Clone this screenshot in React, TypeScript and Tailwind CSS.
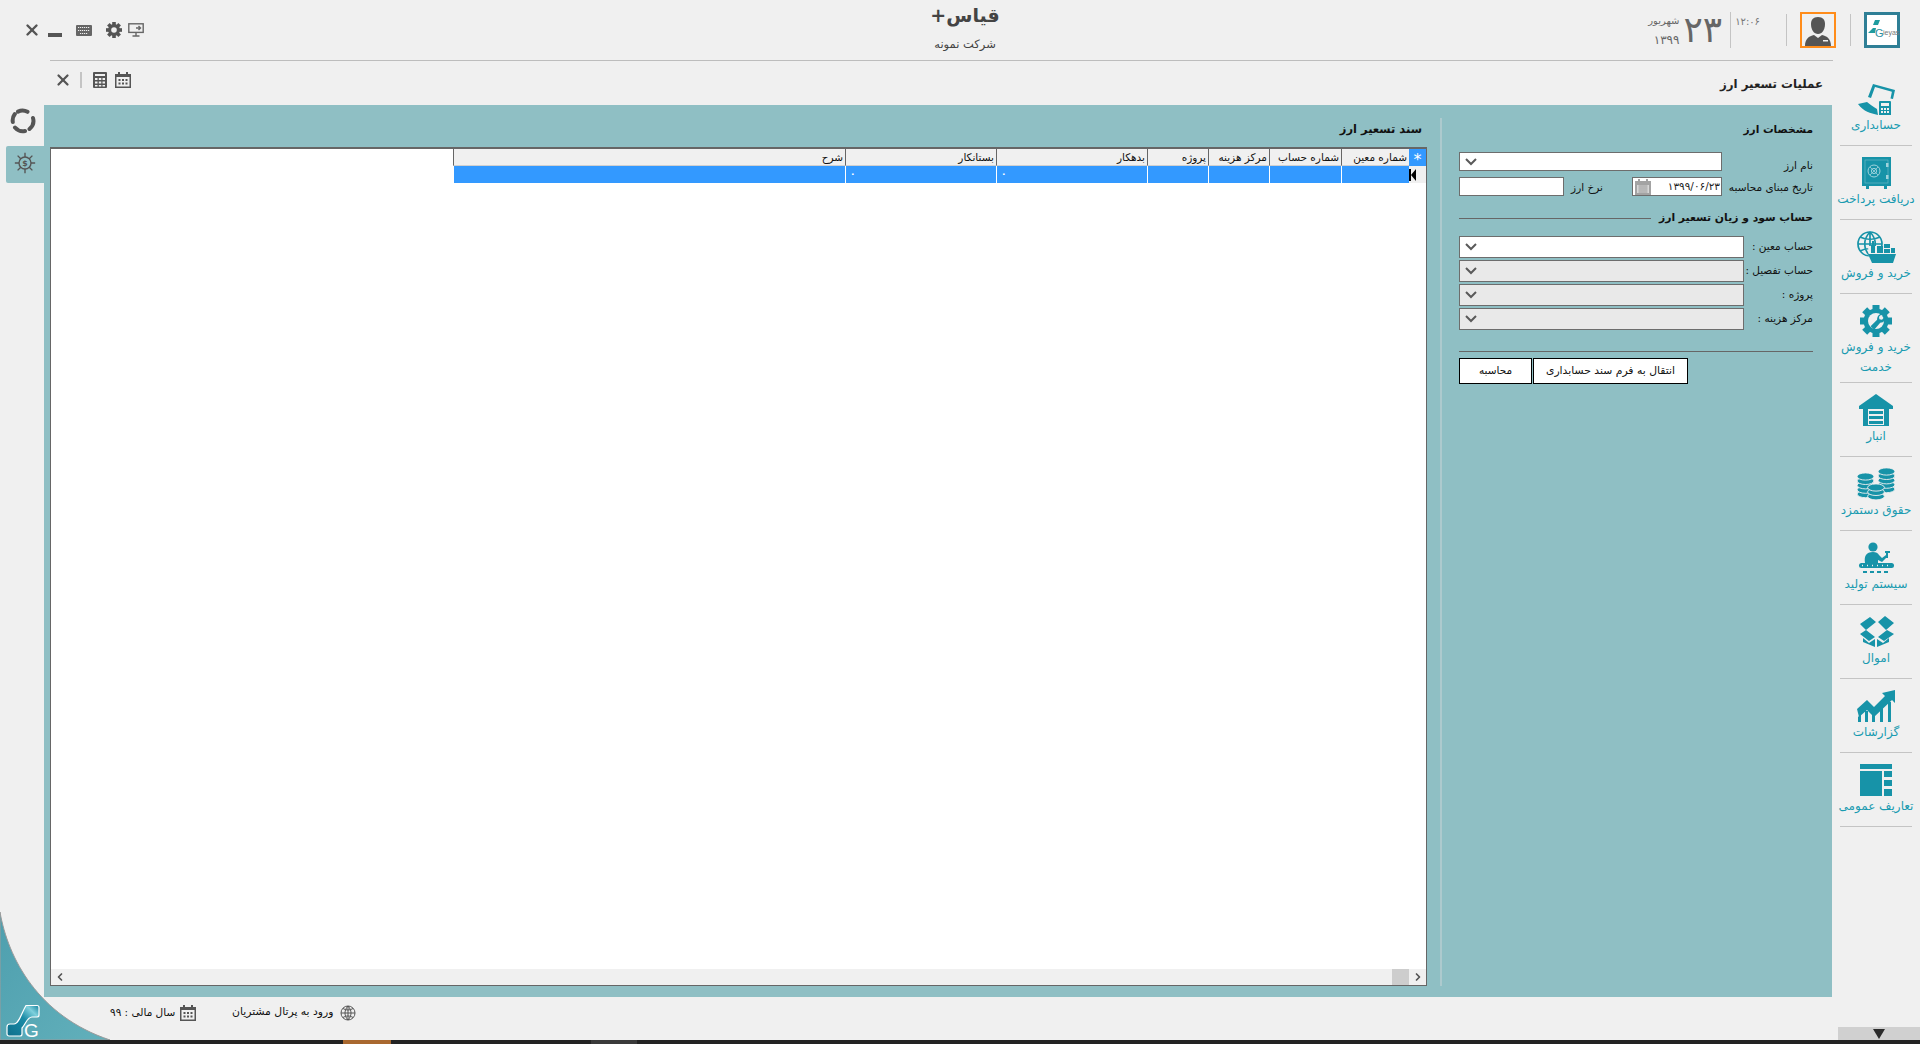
import type { ReactNode } from 'react';
import { ChevronLeft, ChevronRight, X } from 'lucide-react';

const TEAL = '#1793a8';

function SideItem({ icon, label, tall }: { icon: ReactNode; label: string[]; tall?: boolean }) {
  return (
    <div className={`flex flex-col items-center border-b border-[#c4c4c4] pt-[11px] ${tall ? 'h-[89px]' : 'h-[74px]'}`}>
      <svg viewBox="0 0 40 32" className="h-[32px] w-[40px] shrink-0" fill={TEAL}>
        {icon}
      </svg>
      {label.map((t) => (
        <div key={t} dir="rtl" className="h-[20px] whitespace-nowrap text-[12px] leading-[20px] text-[#1a9bb0]">
          {t}
        </div>
      ))}
    </div>
  );
}

function CoinStack({ cx, top, layers }: { cx: number; top: number; layers: number }) {
  const items = [];
  for (let i = layers - 1; i >= 0; i--) {
    items.push(
      <ellipse key={i} cx={cx} cy={top + 3.5 + i * 4.4} rx={8.4} ry={3.6} fill={TEAL} stroke="#f0f0f0" strokeWidth={0.9} />,
    );
  }
  return <g>{items}</g>;
}

function Combo({ disabled, className }: { disabled?: boolean; className: string }) {
  return (
    <div className={`flex items-center border border-[#6d6d6d] pl-[5px] ${disabled ? 'bg-[#e9e9e9]' : 'bg-white'} ${className}`}>
      <svg viewBox="0 0 12 8" className="h-[8px] w-[12px]" fill="none" stroke="#5a5a5a" strokeWidth="2">
        <path d="M1 1l5 5 5-5" />
      </svg>
    </div>
  );
}

function FormLabel({ children, className }: { children: ReactNode; className?: string }) {
  return (
    <span dir="rtl" className={`whitespace-nowrap text-[10.5px] text-[#111] ${className ?? ''}`}>
      {children}
    </span>
  );
}

const columns = [
  { title: 'شماره معین', w: 'w-[68px]' },
  { title: 'شماره حساب', w: 'w-[72px]' },
  { title: 'مرکز هزینه', w: 'w-[61px]' },
  { title: 'پروژه', w: 'w-[61px]' },
  { title: 'بدهکار', w: 'w-[151px]', zero: true },
  { title: 'بستانکار', w: 'w-[151px]', zero: true },
  { title: 'شرح', w: 'w-[392px]' },
];

export default function App() {
  return (
    <div className="relative flex h-[1044px] w-[1920px] flex-col overflow-hidden bg-[#f0f0f0] font-['DejaVu_Sans',sans-serif]">
      {/* corner curve behind the panels */}
      <svg viewBox="0 0 120 132" className="absolute bottom-[4px] left-0 h-[132px] w-[120px]">
        <defs>
          <linearGradient id="corner" x1="0" y1="0" x2="1" y2="1">
            <stop offset="0" stopColor="#4e9fae" />
            <stop offset="1" stopColor="#62b0bb" />
          </linearGradient>
        </defs>
        <path d="M0 4C8 50 38 108 110 132L0 132Z" fill="url(#corner)" stroke="#9b9b9b" strokeWidth={1} />
      </svg>

      {/* top header */}
      <header className="relative flex h-[60px] shrink-0 items-start">
        <div className="ml-[23px] mt-[21px] flex items-center text-[#555]">
          <X size={18} strokeWidth={3.2} />
          <div className="ml-[7px] mt-[10px] h-[4px] w-[14px] bg-[#555]" />
          <svg viewBox="0 0 16 11" className="ml-[14px] h-[11px] w-[16px]" fill="#666">
            <rect width="16" height="11" rx="1" />
            <path d="M2 2.5h12M2 5.5h12M4 8.5h8" stroke="#f0f0f0" strokeWidth="1" strokeDasharray="1.2 .8" />
          </svg>
          <svg viewBox="0 0 16 16" className="ml-[14px] h-[16px] w-[16px]" fill="#555">
            {[0, 45, 90, 135].map((a) => (
              <rect key={a} x="6.2" y="0" width="3.6" height="16" transform={`rotate(${a} 8 8)`} />
            ))}
            <circle cx="8" cy="8" r="6" />
            <circle cx="8" cy="8" r="2.8" fill="#f0f0f0" />
          </svg>
          <svg viewBox="0 0 16 14" className="ml-[6px] h-[14px] w-[16px]" fill="none" stroke="#666" strokeWidth="1.4">
            <rect x=".8" y=".8" width="14.4" height="8.6" />
            <path d="M8 10v2.5M4.5 13h7M8 5h4.5M10.5 3l2 2-2 2" />
          </svg>
        </div>
        <div className="absolute left-[885px] top-[2px] flex w-[160px] flex-col items-center text-[#444]">
          <div className="text-[19px] font-bold leading-[26px]" dir="rtl">قیاس+</div>
          <div className="mt-[9px] text-[11.5px] leading-[14px]" dir="rtl">شرکت نمونه</div>
        </div>
        <div className="ml-auto mr-[20px] mt-[12px] flex h-[36px] items-center">
          <div className="flex flex-col items-end pr-[4px] text-[#666]">
            <span className="text-[10px] leading-[14px]" dir="rtl">شهریور</span>
            <span className="mt-[5px] text-[12px] leading-[14px] tracking-[3px]">۱۳۹۹</span>
          </div>
          <span className="text-[36px] leading-[36px] text-[#666]">۲۳</span>
          <div className="ml-[8px] h-[36px] w-px bg-[#c4c4c4]" />
          <span className="ml-[4px] self-start pt-[3px] text-[10px] leading-[14px] text-[#777]">۱۲:۰۶</span>
          <div className="ml-[26px] h-[32px] w-px bg-[#c4c4c4]" />
          <div className="ml-[13px] flex h-[36px] w-[36px] items-end justify-center border-2 border-[#ff8c1a]">
            <svg viewBox="0 0 28 30" className="h-[30px] w-[28px]" fill="#555">
              <path d="M14 1c5 0 7 3 7 7 0 6-3 10-7 10s-7-4-7-10c0-4 2-7 7-7z" />
              <path d="M1 30c0-7 4-10 9-11l4 3 4-3c5 1 9 4 9 11z" />
              <path d="M19 24h5v1.5h-5z" fill="#f0f0f0" />
            </svg>
          </div>
          <div className="ml-[14px] h-[32px] w-px bg-[#c4c4c4]" />
          <div className="relative ml-[13px] h-[36px] w-[36px] border-[3px] border-[#2f7f96] bg-white">
            <svg viewBox="0 0 30 30" className="absolute inset-0 h-[30px] w-[30px]" fill="#1f9c9f">
              <path d="M8 5h5l-2 5H6zM1 18l5-5h3l-1 5z" />
            </svg>
            <span className="absolute left-[8px] top-[12px] font-['Liberation_Sans',sans-serif] text-[11px] leading-[12px] text-[#2f8fa0]">G</span>
            <span className="absolute left-[16px] top-[14px] font-['Liberation_Sans',sans-serif] text-[7px] leading-[8px] text-[#777]">ieyas</span>
          </div>
        </div>
      </header>
      <div className="ml-[50px] h-px w-[1783px] shrink-0 bg-[#bdbdbd]" />

      <div className="flex min-h-0 flex-1">
        <div className="flex w-[1833px] shrink-0 flex-col">
          {/* toolbar */}
          <div className="flex h-[44px] shrink-0 items-center pb-[7px] pl-[54px] pr-[10px]">
            <X size={18} strokeWidth={3} className="text-[#555]" />
            <div className="ml-[8px] h-[16px] w-[2px] bg-[#c4c4c4]" />
            <svg viewBox="0 0 14 16" className="ml-[11px] h-[16px] w-[14px]" fill="#555">
              <path d="M1 0h12a1 1 0 011 1v14a1 1 0 01-1 1H1a1 1 0 01-1-1V1a1 1 0 011-1z" />
              <path d="M2 2h10v2H2zM2 6h2.5v2H2zM5.8 6h2.5v2H5.8zM9.5 6H12v2H9.5zM2 9.5h2.5v2H2zM5.8 9.5h2.5v2H5.8zM9.5 9.5H12v2H9.5zM2 13h2.5v1.5H2zM5.8 13h2.5v1.5H5.8zM9.5 13H12v1.5H9.5z" fill="#f0f0f0" />
            </svg>
            <svg viewBox="0 0 16 16" className="ml-[8px] h-[16px] w-[16px]" fill="#555">
              <path d="M0 2h16v14H0zM3 0h2v3H3zM11 0h2v3h-2z" />
              <path d="M1.5 5h13v9.5h-13z" fill="#f0f0f0" />
              <path d="M3.5 7h2v2h-2zM7 7h2v2H7zM10.5 7h2v2h-2zM3.5 10.5h2v2h-2zM7 10.5h2v2H7zM10.5 10.5h2v2h-2z" />
            </svg>
            <span dir="rtl" className="ml-auto mt-[11px] text-[11.8px] font-bold text-[#222]">عملیات تسعیر ارز</span>
          </div>

          <div className="flex min-h-0 flex-1">
            {/* left rail */}
            <div className="flex w-[44px] shrink-0 flex-col items-end">
              <div className="flex h-[32px] w-[44px] items-center justify-start pl-[10px]">
                <svg viewBox="0 0 26 26" className="h-[26px] w-[26px]" fill="none" stroke="#555" strokeWidth="4" strokeLinecap="round">
                  <path d="M8 3.6a10.5 10.5 0 019.5.2M23 10a10.5 10.5 0 01-3.5 11M15 23a10.5 10.5 0 01-10-3.5M2.8 14a10.5 10.5 0 012-8" />
                </svg>
              </div>
              <div className="mt-[9px] flex h-[37px] w-[38px] items-center justify-center rounded-l-[2px] bg-[#8fbfc4] pb-[3px]">
                <svg viewBox="0 0 26 26" className="h-[24px] w-[24px]" fill="none" stroke="#555" strokeWidth="1.5">
                  <circle cx="13" cy="13" r="6.5" />
                  <path d="M13 6.5V2M13 19.5V24M6.5 13H2M19.5 13H24M8.4 8.4L5 5M17.6 8.4L21 5M8.4 17.6L5 21M17.6 17.6L21 21" />
                  <text x="13" y="16" textAnchor="middle" fontSize="8.5" fontWeight="700" fill="#555" stroke="none">$</text>
                </svg>
              </div>
            </div>

            {/* main panel */}
            <main className="flex h-[892px] w-[1788px] shrink-0 bg-[#8fbfc4] pb-[11px] pl-[6px] pr-[19px]">
              <section className="flex w-[1377px] shrink-0 flex-col">
                <div dir="rtl" className="flex h-[42px] shrink-0 items-center pt-[8px] pr-[5px] text-[11.5px] font-bold text-[#111]">
                  سند تسعیر ارز
                </div>
                <div className="flex min-h-0 flex-1 flex-col border border-t-2 border-[#666] bg-white">
                  <div dir="rtl" className="flex h-[17px] shrink-0">
                    <div className="flex w-[17px] items-center justify-center bg-[#3399ff] pt-[4px] text-[16px] leading-none text-white">*</div>
                    {columns.map((c) => (
                      <div key={c.title} className={`${c.w} whitespace-nowrap border-l border-b border-l-[#666] border-b-[#d0d0d0] bg-[#f0f0f0] pr-[2px] text-[10.5px] leading-[16px] text-[#111]`}>
                        {c.title}
                      </div>
                    ))}
                  </div>
                  <div dir="rtl" className="flex h-[17px] shrink-0">
                    <div className="flex w-[17px] items-center justify-end bg-[#f0f0f0]">
                      <svg viewBox="0 0 7 12" className="h-[12px] w-[7px]" fill="#000">
                        <path d="M0 0h2v12H0zM7 0v12L2 6z" />
                      </svg>
                    </div>
                    {columns.map((c) => (
                      <div key={c.title} className={`${c.w} flex items-center justify-end border-l border-white bg-[#3399ff] pl-[4px]`}>
                        {c.zero && <span className="text-[9px] font-bold leading-none text-white">۰</span>}
                      </div>
                    ))}
                  </div>
                  <div className="flex-1" />
                  <div className="flex h-[16px] shrink-0 items-center bg-[#f0f0f0]">
                    <ChevronLeft size={12} strokeWidth={3.4} className="ml-[3px] text-[#555]" />
                    <div className="ml-auto h-[16px] w-[17px] bg-[#cdcdcd]" />
                    <ChevronRight size={12} strokeWidth={3.4} className="ml-[3px] mr-[2px] text-[#555]" />
                  </div>
                </div>
              </section>

              <div className="ml-[13px] mt-[13px] w-[2px] shrink-0 bg-[#adcace]" />

              <section className="ml-[17px] flex w-[354px] shrink-0 flex-col">
                <div dir="rtl" className="mt-[15px] h-[18px] text-[10.6px] font-bold leading-[18px] text-[#111]">مشخصات ارز</div>
                <div className="mt-[14px] flex h-[19px] items-start">
                  <Combo className="h-[19px] w-[263px]" />
                  <FormLabel className="ml-auto mt-[6px] leading-[14px]">نام ارز</FormLabel>
                </div>
                <div className="mt-[6px] flex h-[19px] items-center">
                  <div className="h-[19px] w-[105px] border border-[#6d6d6d] bg-white" />
                  <FormLabel className="ml-[13px] mt-[2px] w-[26px]">نرخ ارز</FormLabel>
                  <div className="ml-[29px] flex h-[19px] w-[90px] items-center justify-between border border-[#6d6d6d] bg-white pr-[1px]">
                    <svg viewBox="0 0 16 16" className="ml-[2px] h-[16px] w-[16px]" fill="#a3a3a3">
                      <path d="M0 2h16v14H0zM3 0h2v3H3zM11 0h2v3h-2z" />
                      <path d="M2 6h12v8H2z" fill="#d8d8d8" />
                      <path d="M3.5 7h9M3.5 9h9M3.5 11h9M3.5 13h9" stroke="#888" strokeWidth=".8" />
                    </svg>
                    <span className="text-[10.5px] text-[#222]">۱۳۹۹/۰۶/۲۳</span>
                  </div>
                  <FormLabel className="ml-auto mt-[2px]">تاریخ مبنای محاسبه</FormLabel>
                </div>
                <div className="mt-[13px] flex h-[19px] items-center">
                  <div className="h-px flex-1 bg-[#666]" />
                  <span dir="rtl" className="ml-[8px] text-[10.8px] font-bold text-[#111]">حساب سود و زیان تسعیر ارز</span>
                </div>
                <div className="mt-[8px] flex flex-col gap-[2px]">
                  {[
                    { label: 'حساب معین :', disabled: false },
                    { label: 'حساب تفصیل :', disabled: true },
                    { label: 'پروژه :', disabled: true },
                    { label: 'مرکز هزینه :', disabled: true },
                  ].map((r) => (
                    <div key={r.label} className="flex h-[22px] items-center">
                      <Combo disabled={r.disabled} className="h-[22px] w-[285px]" />
                      <FormLabel className="ml-auto">{r.label}</FormLabel>
                    </div>
                  ))}
                </div>
                <div className="mt-[21px] h-px bg-[#666]" />
                <div className="mt-[6px] flex h-[26px] gap-[1px]">
                  <button className="w-[73px] border border-black bg-white text-[10.5px] text-[#111]">محاسبه</button>
                  <button className="w-[155px] border border-black bg-white text-[10.8px] text-[#111]">انتقال به فرم سند حسابداری</button>
                </div>
              </section>
            </main>
          </div>

          {/* status bar */}
          <footer className="relative flex h-[43px] shrink-0 items-center pb-[12px] text-[#111]">
            <div className="ml-[110px] flex w-[86px] items-center justify-between">
              <span dir="rtl" className="whitespace-nowrap text-[10.5px]">سال مالی : ۹۹</span>
              <svg viewBox="0 0 16 16" className="h-[16px] w-[16px] shrink-0" fill="#555">
                <path d="M0 2h16v14H0zM3 0h2v3H3zM11 0h2v3h-2z" />
                <path d="M1.5 5h13v9.5h-13z" fill="#f0f0f0" />
                <path d="M3.5 7h2v2h-2zM7 7h2v2H7zM10.5 7h2v2h-2zM3.5 10.5h2v2h-2zM7 10.5h2v2H7zM10.5 10.5h2v2h-2z" />
              </svg>
            </div>
            <div className="ml-[36px] flex w-[124px] items-center justify-between">
              <span dir="rtl" className="whitespace-nowrap text-[10.8px]">ورود به پرتال مشتریان</span>
              <svg viewBox="0 0 16 16" className="h-[16px] w-[16px] shrink-0" fill="none" stroke="#555" strokeWidth="1">
                <circle cx="8" cy="8" r="7" />
                <path d="M1 8h14M8 1v14M3 3.5c3 2 7 2 10 0M3 12.5c3-2 7-2 10 0M8 1c-4 4-4 10 0 14M8 1c4 4 4 10 0 14" />
              </svg>
            </div>
            {/* corner logo */}
            <svg viewBox="0 0 36 36" className="absolute bottom-0 left-[5px] h-[36px] w-[36px]">
              <defs>
                <linearGradient id="logoFill" x1="0" y1="1" x2="1" y2="0">
                  <stop offset="0" stopColor="#0f6f8c" />
                  <stop offset="0.55" stopColor="#1a8ba6" />
                  <stop offset="0.8" stopColor="#7fd0dc" />
                  <stop offset="1" stopColor="#12809c" />
                </linearGradient>
              </defs>
              <path
                d="M21 1.5H32a2 2 0 012 2V11a2 2 0 01-2 2H27C22 13 21 20 17 24V30a2 2 0 01-2 2H4a2 2 0 01-2-2V23a3 3 0 013-3H9C14 20 17 8 21 1.5Z"
                fill="url(#logoFill)"
                stroke="#fff"
                strokeWidth="1.2"
              />
              <text x="19" y="33" fontSize="19" fill="#fff" fontFamily="'Liberation Sans',sans-serif">G</text>
            </svg>
          </footer>
        </div>

        {/* right module menu */}
        <aside className="flex w-[87px] shrink-0 flex-col pt-[11px]">
          <div className="flex flex-col pl-[7px] pr-[8px]">
            <SideItem
              label={['حسابداری']}
              icon={
                <g>
                  <path d="M12 14L17 1l22 6-2 9-2.5-.6 1.4-6.6L19 4l-4 11z" />
                  <path d="M2 21l9-2c3 2 6 5 10 7l1 6c-8-2-14-3-20-11z" />
                  <rect x="23" y="18" width="12" height="15" rx="1" />
                  <path d="M25 20h8v3h-8zM25 25h2v2h-2zM28 25h2v2h-2zM31 25h2v2h-2zM25 28h2v2h-2zM28 28h2v2h-2zM31 28h2v2h-2z" fill="#f0f0f0" />
                </g>
              }
            />
            <SideItem
              label={['دریافت پرداخت']}
              icon={
                <g>
                  <path d="M6 0h29v29h-4v3h-3v-3H13v3h-3v-3H6z" />
                  <rect x="9" y="3" width="23" height="23" fill="none" stroke="#67b7c5" strokeWidth=".7" />
                  <circle cx="18" cy="14" r="6" fill="none" stroke="#9fd3dc" strokeWidth="1" />
                  <circle cx="18" cy="14" r="2.6" fill="none" stroke="#9fd3dc" strokeWidth="1" />
                  <path d="M14 10l8 8M22 10l-8 8" stroke="#9fd3dc" strokeWidth=".8" />
                  <rect x="30" y="6" width="2.5" height="4" fill="#9fd3dc" />
                  <rect x="30" y="18" width="2.5" height="4" fill="#9fd3dc" />
                </g>
              }
            />
            <SideItem
              label={['خرید و فروش']}
              icon={
                <g>
                  <g fill="none" stroke={TEAL} strokeWidth="1.7">
                    <circle cx="14" cy="13" r="12" />
                    <path d="M2 13h24M14 1v24M4 6c6 3 14 3 20 0M4 20c6-3 14-3 20 0M14 1c-7 7-7 17 0 24M14 1c7 7 7 17 0 24" />
                  </g>
                  <path d="M12 15h27v3l-3 8c-4 5-18 6-23 1z" fill="#f0f0f0" />
                  <path d="M12 23h28l-3 9H16z" />
                  <path d="M15 14h4v8h-4zM21 15h6v7h-6zM28 13h6v4h-6zM28 18h6v4h-6zM35 17h4v5h-4zM16 10h2v4h-2z" />
                </g>
              }
            />
            <SideItem
              tall
              label={['خرید و فروش', 'خدمت']}
              icon={
                <g>
                  <g>
                    {[0, 45, 90, 135, 180, 225, 270, 315].map((a) => (
                      <rect key={a} x="16.5" y="0" width="7" height="7" transform={`rotate(${a} 20 16)`} />
                    ))}
                  </g>
                  <circle cx="20" cy="16" r="12.5" />
                  <circle cx="20" cy="16" r="8" fill="#f0f0f0" />
                  <path d="M26.5 8.5l-3.5 3.2.4 2.6 2.6.5 3.2-3.5c.6 3-1 6.5-5 6.5l-6 7-3.6-3.5 6.5-6.5c-.2-4 3-6.5 5.4-6.3z" />
                </g>
              }
            />
            <SideItem
              label={['انبار']}
              icon={
                <g>
                  <path d="M20 0l17 12v3H3v-3z" />
                  <path d="M7 14h26v18H7z" />
                  <path d="M12 15h16v16H12z" fill="#f0f0f0" />
                  <path d="M13 17h14v3H13zM13 22h14v3H13zM13 27h14v3H13z" />
                </g>
              }
            />
            <SideItem
              label={['حقوق دستمزد']}
              icon={
                <g>
                  <CoinStack cx={30.5} top={0} layers={5} />
                  <CoinStack cx={9.5} top={5} layers={5} />
                  <CoinStack cx={20} top={16} layers={3} />
                </g>
              }
            />
            <SideItem
              label={['سیستم تولید']}
              icon={
                <g>
                  <circle cx="17" cy="5" r="4.6" />
                  <path d="M9 21c-1-7 1-11 8-11 3 0 5 1 6 3l3 3 4-3 1 2-5 5-4-2v3z" />
                  <path d="M29 9h5v2h-5zM30 11h2v5h-2z" />
                  <rect x="3" y="21" width="35" height="5" rx="2.5" />
                  <path d="M6 23.5h1M11 23.5h1M16 23.5h1M21 23.5h1M26 23.5h1M31 23.5h1" stroke="#f0f0f0" strokeWidth="1.4" />
                  <path d="M7 29h4v2H7zM14 29h4v2h-4zM21 29h4v2h-4zM28 29h4v2h-4z" />
                </g>
              }
            />
            <SideItem
              label={['اموال']}
              icon={
                <g>
                  <path d="M4 8l10-7 6 5-10 8zM22 6l7-6 9 7-8 7zM4 18l6-4 9 7-6 4zM38 18l-7-4-9 7 6 4z" />
                  <path d="M7 22l6 5 6-4v8l-12-5zM33 22l-6 5-6-4v8l12-5z" />
                </g>
              }
            />
            <SideItem
              label={['گزارشات']}
              icon={
                <g>
                  <path d="M1 19l10-9 7 7L29 6l-3-3 13-3v13l-3-3-18 17-7-7-8 7z" />
                  <path d="M2 27l3-3v8H2zM9 21h3v11H9zM16 24l3 2v6h-3zM24 18h3v14h-3zM32 12h3v20h-3z" />
                </g>
              }
            />
            <SideItem
              label={['تعاریف عمومی']}
              icon={
                <g>
                  <path d="M4 0h32v5H4zM4 7h22v25H4zM28 7h8v6h-8zM28 16h8v6h-8zM28 25h8v7h-8z" />
                </g>
              }
            />
          </div>
          <div className="ml-[5px] mt-auto mb-0 flex h-[13px] items-center justify-center bg-[#d0d0d0]">
            <svg viewBox="0 0 12 10" className="h-[10px] w-[12px]" fill="#2b2b2b">
              <path d="M0 0h12L6 10z" />
            </svg>
          </div>
        </aside>
      </div>

      {/* window taskbar strip */}
      <div className="flex h-[4px] shrink-0 bg-[#232323]">
        <div className="ml-[343px] w-[48px] bg-[#a9682f]" />
        <div className="ml-[200px] w-[46px] bg-[#3a3a3a]" />
      </div>
    </div>
  );
}
